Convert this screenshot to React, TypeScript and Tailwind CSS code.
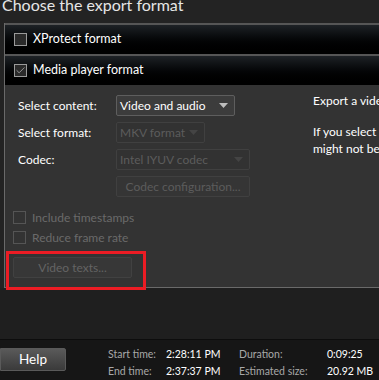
import { Check } from "lucide-react";

const font = { fontFamily: "Lato, 'Noto Sans', sans-serif" };

function Box({ checked, dim }: { checked?: boolean; dim?: boolean }) {
  return (
    <div
      className={`w-[13px] h-[13px] border flex items-center justify-center ${
        dim ? "border-[#555] bg-[#333]" : "border-[#9a9a9a] bg-[#2a2a2a]"
      }`}
    >
      {checked && <Check size={13} strokeWidth={1.2} className="text-[#e8e8e8]" />}
    </div>
  );
}

function Caret({ dim }: { dim?: boolean }) {
  return (
    <svg width="9" height="5" viewBox="0 0 9 5">
      <path d="M0 0h9L4.5 5z" fill={dim ? "#444" : "#bdbdbd"} />
    </svg>
  );
}

export default function App() {
  return (
    <div
      className="w-[379px] h-[380px] overflow-hidden bg-[#232323] flex flex-col relative"
      style={font}
    >
      {/* title */}
      <div className="h-[23px] overflow-hidden">
        <h1 className="text-[16px] leading-[22px] -mt-[6px] pl-[2px] text-[#e6e6e6] whitespace-nowrap">
          Choose the export format
        </h1>
      </div>

      {/* format panel */}
      <div className="ml-[4px] w-[600px] border-l border-b border-[#6a6a6a] flex flex-col">
        <div className="h-[31px] border-t-2 border-[#565656] bg-gradient-to-b from-[#1e2226] to-[#000] flex items-center gap-[6px] pl-[9px]">
          <Box />
          <span className="text-[12.5px] text-white">XProtect format</span>
        </div>
        <div className="h-[31px] border-t-2 border-[#565656] bg-gradient-to-b from-[#1e2226] to-[#000] flex items-center gap-[6px] pl-[9px]">
          <Box checked />
          <span className="text-[12.5px] text-white">Media player format</span>
        </div>

        <div className="h-[202px] bg-[#333] flex">
          <div className="w-[300px] pl-[13px] pt-[10px] flex flex-col">
            <div className="grid grid-cols-[98px_auto] gap-y-[6px] text-[12px] text-white items-center">
              <span>Select content:</span>
              <div className="w-[119px] h-[21px] rounded-[2px] border border-[#5e5e5e] bg-[#3c3c3c] flex items-center justify-between px-[3px] pr-[6px]">
                <span className="text-white">Video and audio</span>
                <Caret />
              </div>
              <span>Select format:</span>
              <div className="w-[89px] h-[21px] rounded-[2px] border border-[#404040] bg-[#323232] flex items-center justify-between px-[3px] pr-[6px]">
                <span className="text-[#5c5c5c]">MKV format</span>
                <Caret dim />
              </div>
              <span>Codec:</span>
              <div className="w-[134px] h-[21px] rounded-[2px] border border-[#404040] bg-[#323232] flex items-center justify-between px-[3px] pr-[6px]">
                <span className="text-[#5c5c5c]">Intel IYUV codec</span>
                <Caret dim />
              </div>
              <span />
              <div className="w-[134px] h-[21px] rounded-[2px] border border-[#404040] bg-[#353535] flex items-center justify-center">
                <span className="text-[#5c5c5c]">Codec configuration...</span>
              </div>
            </div>

            <div className="mt-[14px] -ml-[5px] flex flex-col gap-[7px] text-[12px] text-[#6a6a6a]">
              <div className="h-[13px] flex items-center gap-[6px]">
                <Box dim />
                <span>Include timestamps</span>
              </div>
              <div className="h-[13px] flex items-center gap-[6px]">
                <Box dim />
                <span>Reduce frame rate</span>
              </div>
            </div>

            <div className="mt-[13px] -ml-[5px] w-[119px] h-[21px] rounded-[2px] border border-[#414141] bg-[#373737] flex items-center justify-center">
              <span className="text-[12px] text-[#646464]">Video texts...</span>
            </div>
          </div>

          <div className="pl-[8px] pt-[7px] text-[12px] text-white leading-[17px] whitespace-nowrap">
            <p>Export a video file playable by most media players.</p>
            <p className="mt-[14px]">If you select a codec which is not installed, the file</p>
            <p>might not be playable on other computers.</p>
          </div>
        </div>
      </div>

      <div className="flex-1 bg-[#1f1f1f]" />

      {/* footer */}
      <div className="h-[41px] border-t border-[#0d0d0d] bg-[#161616] flex items-center text-[10.5px]">
        <button className="w-[66px] h-[23px] mt-[-2px] rounded-r-[2px] border border-[#5a5a5a] bg-gradient-to-b from-[#5a5a5a] to-[#3a3a3a] text-[13.5px] text-white">
          Help
        </button>
        <div className="ml-[42px] mt-[6px] grid grid-cols-[58px_73px_88px_auto] gap-y-[4px] leading-[13px]">
          <span className="text-[#a8a8a8]">Start time:</span>
          <span className="text-white">2:28:11 PM</span>
          <span className="text-[#a8a8a8]">Duration:</span>
          <span className="text-white">0:09:25</span>
          <span className="text-[#a8a8a8]">End time:</span>
          <span className="text-white">2:37:37 PM</span>
          <span className="text-[#a8a8a8]">Estimated size:</span>
          <span className="text-white">20.92 MB</span>
        </div>
      </div>

      {/* red highlight annotation */}
      <div className="absolute left-[6px] top-[251px] w-[140px] h-[39px] border-[3px] border-[#ec1c24]" />
    </div>
  );
}
